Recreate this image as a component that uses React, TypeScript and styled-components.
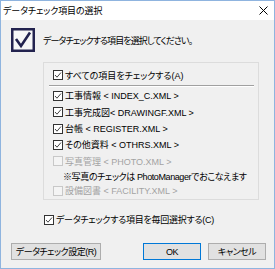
import React from "react";
import styled, { createGlobalStyle, css } from "styled-components";

const GlobalStyle = createGlobalStyle`
  html, body { margin: 0; padding: 0; background: #ffffff; }
  body {
    font-family: "Liberation Sans", "Noto Sans CJK JP", sans-serif;
    font-size: 9px;
    font-feature-settings: "palt";
    color: #000;
  }
`;

const Window = styled.div`
  box-sizing: border-box;
  width: 275px;
  height: 269px;
  border: 1px solid #8fb4df;
  background: #f0f0f0;
  display: flex;
  flex-direction: column;
`;

const TitleBar = styled.div`
  height: 19px;
  background: #ffffff;
  display: flex;
  align-items: center;
  justify-content: space-between;
  padding: 0 6px 0 2px;
  font-size: 9px;
  letter-spacing: -0.1px;
`;

const Body = styled.div`
  flex: 1;
  display: flex;
  flex-direction: column;
  padding: 8px 8px 0 10px;
`;

const Header = styled.div`
  display: flex;
  align-items: center;
  gap: 8px;
  height: 24px;
  font-size: 9px;
  letter-spacing: -0.9px;
`;

const GroupBox = styled.div`
  box-sizing: border-box;
  margin: 10px 0 0 32px;
  width: 216px;
  height: 138px;
  border: 1px solid #dcdcdc;
  padding: 4px 6px 0 9px;
  display: flex;
  flex-direction: column;
`;

const Row = styled.label<{ $disabled?: boolean; $tight?: number }>`
  display: flex;
  align-items: center;
  gap: 2px;
  height: 17px;
  color: ${(p) => (p.$disabled ? "#a3a3a3" : "#000")};
  letter-spacing: ${(p) => p.$tight ?? 0}px;
  white-space: nowrap;
`;

const Note = styled.div`
  height: 13px;
  display: flex;
  align-items: center;
  padding-left: 10px;
  letter-spacing: -0.4px;
  white-space: nowrap;
`;

const Separator = styled.div`
  margin: 2px -2px 0 -4px;
  height: 1px;
  background: #a0a0a0;
  border-bottom: 1px solid #ffffff;
`;

const Box = styled.span<{ $disabled?: boolean }>`
  box-sizing: border-box;
  width: 10px;
  height: 10px;
  flex: none;
  display: inline-flex;
  align-items: center;
  justify-content: center;
  ${(p) =>
    p.$disabled
      ? css`
          border: 1px solid #c8c8c8;
          background: #f4f4f4;
        `
      : css`
          border: 1px solid #333333;
          background: #ffffff;
        `}
`;

const Footer = styled.div`
  display: flex;
  align-items: center;
  margin-top: 15px;
`;

const Spacer = styled.div`
  flex: 1;
`;

const Button = styled.button<{ $w: number; $primary?: boolean }>`
  box-sizing: border-box;
  width: ${(p) => p.$w}px;
  height: 17px;
  padding: 0;
  margin: 0;
  font: inherit;
  font-size: 9px;
  letter-spacing: -0.5px;
  white-space: nowrap;
  color: #000;
  background: #e1e1e1;
  border: 1px solid ${(p) => (p.$primary ? "#0078d7" : "#adadad")};
  & + & {
    margin-left: 7px;
  }
`;

const BottomRow = styled(Row)`
  margin: 11px 0 0 33px;
`;

function Check({ checked, disabled }: { checked?: boolean; disabled?: boolean }) {
  return (
    <Box $disabled={disabled}>
      {checked && (
        <svg width="8" height="8" viewBox="0 0 8 8">
          <path d="M1 4 L3 6.2 L7 1.5" fill="none" stroke="#444" strokeWidth="1" />
        </svg>
      )}
    </Box>
  );
}

function BigCheck() {
  return (
    <svg width="24" height="24" viewBox="0 0 24 24">
      <rect x="1.25" y="1.25" width="21.5" height="21.5" fill="#f7f7f7" stroke="#23234f" strokeWidth="2.5" />
      <path d="M5 11 L10 18 L19 4.5" fill="none" stroke="#23234f" strokeWidth="2.6" />
    </svg>
  );
}

const items: { label: string; checked: boolean; disabled?: boolean }[] = [
  { label: "工事情報 < INDEX_C.XML >", checked: true },
  { label: "工事完成図< DRAWINGF.XML >", checked: true },
  { label: "台帳 < REGISTER.XML >", checked: true },
  { label: "その他資料 < OTHRS.XML >", checked: true },
  { label: "写真管理 < PHOTO.XML >", checked: false, disabled: true },
];

export default function App() {
  return (
    <>
      <GlobalStyle />
      <Window>
        <TitleBar>
          <span>データチェック項目の選択</span>
          <svg width="9" height="9" viewBox="0 0 9 9">
            <path d="M0.5 0.5 L8.5 8.5 M8.5 0.5 L0.5 8.5" stroke="#000" strokeWidth="1" />
          </svg>
        </TitleBar>
        <Body>
          <Header>
            <BigCheck />
            <span>データチェックする項目を選択してください。</span>
          </Header>
          <GroupBox>
            <Row>
              <Check checked />
              <span>すべての項目をチェックする(A)</span>
            </Row>
            <Separator />
            {items.map((it) => (
              <Row key={it.label} $disabled={it.disabled}>
                <Check checked={it.checked} disabled={it.disabled} />
                <span>{it.label}</span>
              </Row>
            ))}
            <Note>※写真のチェックは PhotoManagerでおこなえます</Note>
            <Row $disabled>
              <Check disabled />
              <span>{"設備図書 < FACILITY.XML >"}</span>
            </Row>
          </GroupBox>
          <BottomRow $tight={-0.25}>
            <Check checked />
            <span>データチェックする項目を毎回選択する(C)</span>
          </BottomRow>
          <Footer>
            <Button $w={90}>データチェック設定(R)</Button>
            <Spacer />
            <Button $w={58} $primary>OK</Button>
            <Button $w={58}>キャンセル</Button>
          </Footer>
        </Body>
      </Window>
    </>
  );
}
